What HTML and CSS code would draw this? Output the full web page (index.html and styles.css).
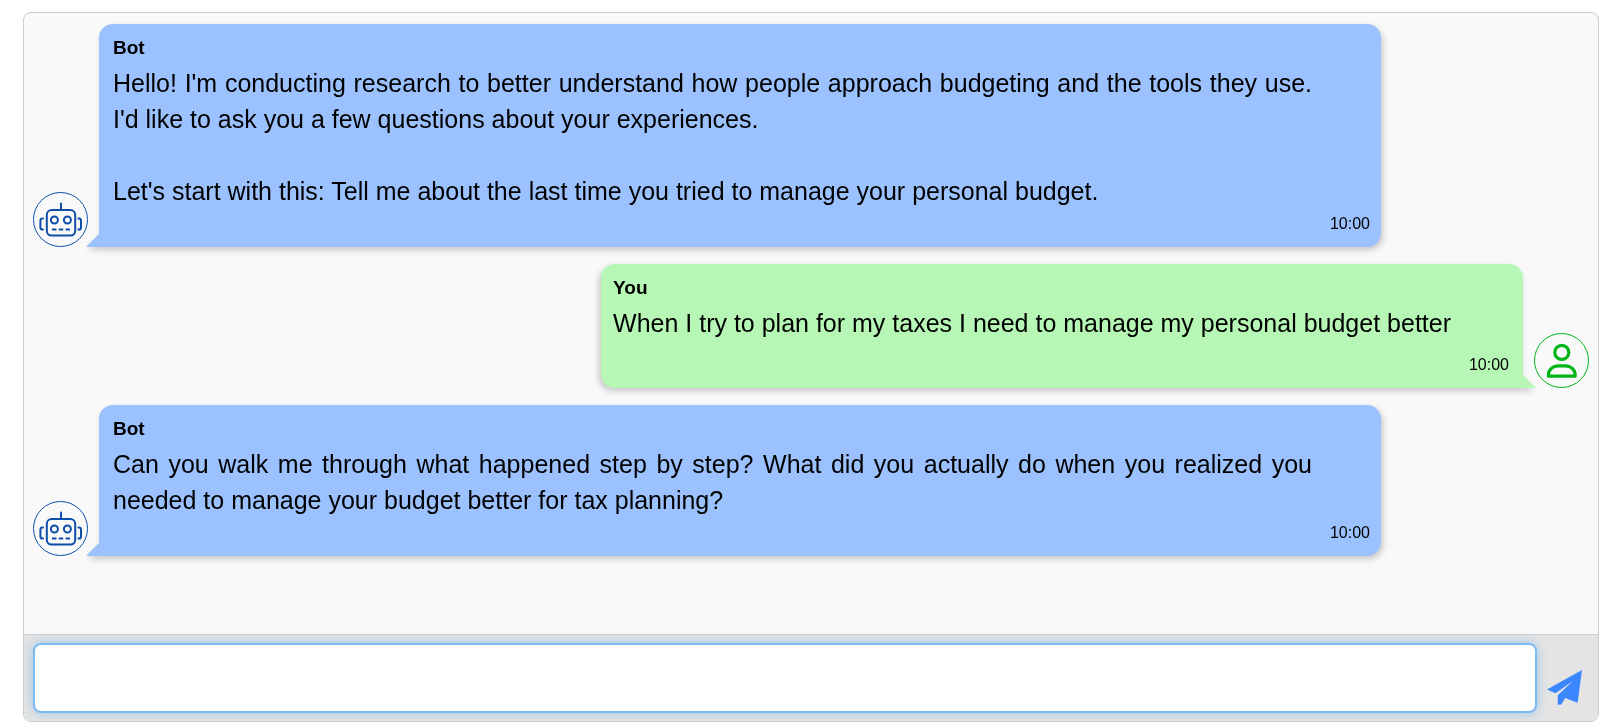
FILE: index.html
```html
<!DOCTYPE html>
<html lang="en">
<head>
    <meta charset="UTF-8">
    <meta name="viewport" content="width=device-width, initial-scale=1.0">
    <title>Chat</title>
    <link rel="stylesheet" href="styles.css">
</head>
<body>
    <svg class="symbols" aria-hidden="true">
        <symbol id="robot" viewBox="0 0 55 55">
            <g fill="none" stroke="currentColor" stroke-width="2" stroke-linecap="round">
                <rect x="13.8" y="18" width="28.4" height="25.6" rx="4.8"/>
                <path d="M28 11.6v6.4"/>
                <circle cx="21.4" cy="28" r="3.5"/>
                <circle cx="34.4" cy="28" r="3.5"/>
                <path stroke-linecap="butt" d="M19 37.6h4.4M25.8 37.6h4.4M32.6 37.6h4.4"/>
                <path d="M10 26.6H9.4Q7.4 26.6 7.4 29V35.2Q7.4 37.6 9.4 37.6H10M45.4 26.6h.6Q48 26.6 48 29V35.2Q48 37.6 46 37.6H45.4"/>
            </g>
        </symbol>
        <symbol id="person" viewBox="0 0 55 55">
            <g fill="none" stroke="currentColor" stroke-width="3.2" stroke-linejoin="round">
                <circle cx="27.8" cy="19.4" r="7"/>
                <path d="M14.4 43.2v-1C14.4 36.6 19 32.8 24 32.8h7.6c5 0 9.6 3.8 9.6 9.4V43.2z"/>
            </g>
        </symbol>
    </svg>

    <div class="chat">
        <div class="messages" id="messages">
            <div class="message bot">
                <div class="avatar"><svg><use href="#robot"/></svg></div>
                <div class="bubble">
                    <div class="name">Bot</div>
                    <div class="text">Hello! I'm conducting research to better understand how people approach budgeting and the tools they use. I'd like to ask you a few questions about your experiences.<br><br>Let's start with this: Tell me about the last time you tried to manage your personal budget.</div>
                    <div class="time">10:00</div>
                </div>
            </div>

            <div class="message user">
                <div class="bubble">
                    <div class="name">You</div>
                    <div class="text">When I try to plan for my taxes I need to manage my personal budget better</div>
                    <div class="time">10:00</div>
                </div>
                <div class="avatar"><svg><use href="#person"/></svg></div>
            </div>

            <div class="message bot">
                <div class="avatar"><svg><use href="#robot"/></svg></div>
                <div class="bubble">
                    <div class="name">Bot</div>
                    <div class="text">Can you walk me through what happened step by step? What did you actually do when you realized you needed to manage your budget better for tax planning?</div>
                    <div class="time">10:00</div>
                </div>
            </div>
        </div>

        <form class="composer">
            <textarea id="chatInput" aria-label="Message"></textarea>
            <button type="submit" class="send" aria-label="Send">
                <svg viewBox="0 0 104 104"><path fill="currentColor" d="M0 58 104 0 91 97 54 83 43 102Q37 105 32 102V75L77 33 25 69z"/></svg>
            </button>
        </form>
    </div>

    <script>
        document.querySelector('.composer').addEventListener('submit', (event) => {
            event.preventDefault();
        });
    </script>
</body>
</html>
```

FILE: styles.css
```css
* {
    box-sizing: border-box;
}
body {
    margin: 0;
    padding: 12px 1px 4px 23px;
    font-family: "Liberation Sans", Arial, sans-serif;
    color: #000;
    background-color: white;
}
.symbols {
    display: none;
}
.chat {
    display: flex;
    flex-direction: column;
    min-height: calc(100vh - 16px);
    border: 1px solid #ccc;
    border-radius: 8px;
    background-color: #f9f9f9;
    overflow: hidden;
}
.messages {
    flex: 1;
    display: flex;
    flex-direction: column;
    gap: 17px;
    padding: 11px 9px;
}
.message {
    display: flex;
    align-items: flex-end;
    gap: 11px;
}
.message.user {
    justify-content: flex-end;
}
.avatar {
    flex: none;
    width: 55px;
    height: 55px;
    border: 1px solid;
    border-radius: 50%;
}
.avatar svg {
    display: block;
    width: 55px;
    height: 55px;
    margin: -1px;
}
.bot .avatar {
    color: #0d4fa8;
}
.user .avatar {
    color: #00b515;
}
.bubble {
    position: relative;
    max-width: calc(100% - 274px);
    padding: 14px 11px 14px 14px;
    border-radius: 14px;
}
.bubble::after {
    content: "";
    position: absolute;
    bottom: 0;
    width: 13px;
    height: 13px;
    background-color: inherit;
}
.bot .bubble {
    background-color: #9bc1ff;
    border-bottom-left-radius: 0;
    filter: drop-shadow(2px 3px 3px rgba(0,0,0,0.2));
}
.bot .bubble::after {
    right: 100%;
    clip-path: polygon(100% 0, 100% 100%, 0 100%);
}
.user .bubble {
    padding: 14px 14px 14px 12px;
    background-color: #b6f7b6;
    border-bottom-right-radius: 0;
    filter: drop-shadow(-2px 3px 3px rgba(0,0,0,0.2));
}
.user .bubble::after {
    left: 100%;
    clip-path: polygon(0 0, 100% 100%, 0 100%);
}
.name {
    font-size: 19px;
    font-weight: bold;
    line-height: 20px;
}
.text {
    margin: 7px 58px 6px 0;
    font-size: 25px;
    line-height: 36px;
    text-align: justify;
}
.user .text {
    margin-bottom: 15px;
}
.time {
    font-size: 16px;
    line-height: 18px;
    text-align: right;
}
.composer {
    display: flex;
    gap: 10px;
    padding: 8px 16px 8px 9px;
    border-top: 1px solid #ccc;
    background-color: #e4e4e4;
}
textarea {
    flex: 1;
    height: 70px;
    padding: 10px;
    border: 2px solid #7ebbee;
    border-radius: 8px;
    outline: none;
    resize: none;
    background-color: white;
    box-shadow: 0 0 12px rgba(102,175,233,0.6);
    font: 25px/36px "Liberation Sans", Arial, sans-serif;
}
.send {
    align-self: flex-end;
    padding: 0 0 8px;
    border: none;
    background: none;
    color: #3a87ff;
    cursor: pointer;
}
.send svg {
    display: block;
    width: 35px;
    height: 35px;
}
```
